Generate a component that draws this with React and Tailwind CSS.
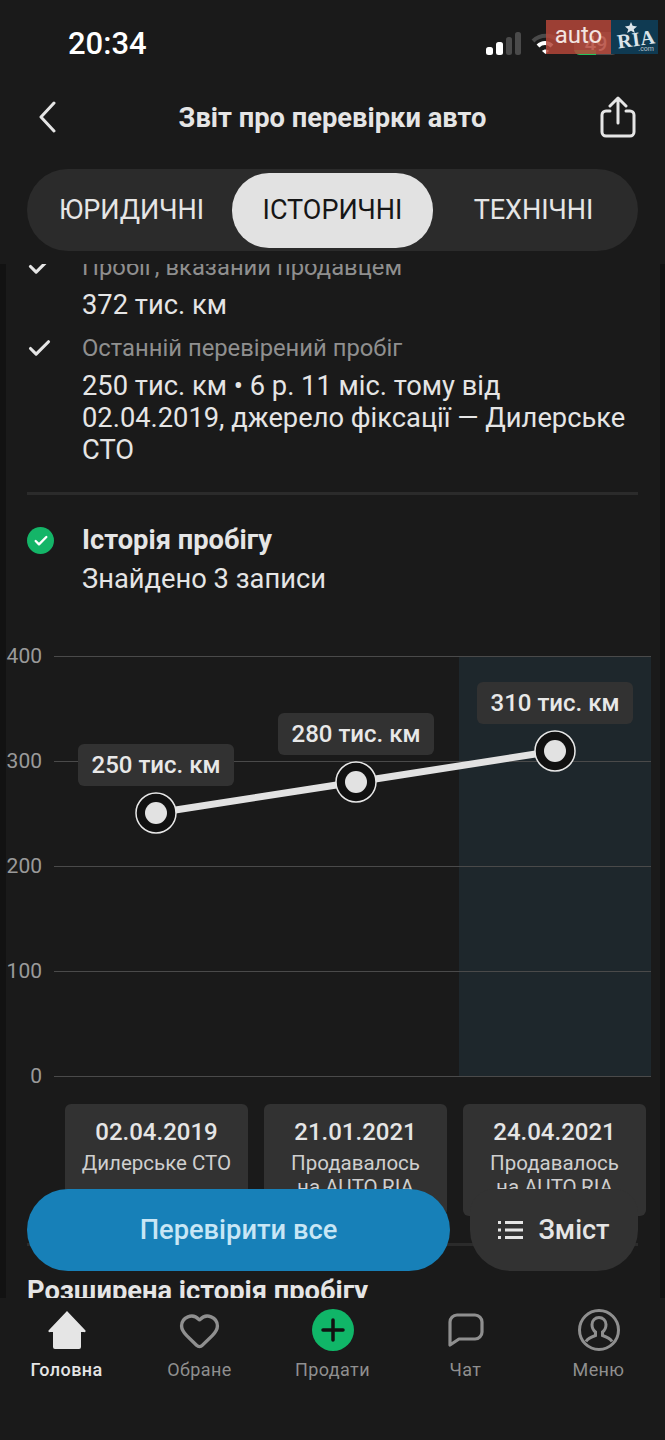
import React from "react";
import { Check, Heart } from "lucide-react";

const GRID = [
  { label: "400", y: 0 },
  { label: "300", y: 105 },
  { label: "200", y: 210 },
  { label: "100", y: 315 },
  { label: "0", y: 420 },
];

const POINTS = [
  { x: 156, y: 157, label: "250 тис. км" },
  { x: 356, y: 126, label: "280 тис. км" },
  { x: 555, y: 95, label: "310 тис. км" },
];

const CARDS = [
  { date: "02.04.2019", lines: ["Дилерське СТО"] },
  { date: "21.01.2021", lines: ["Продавалось", "на AUTO.RIA"] },
  { date: "24.04.2021", lines: ["Продавалось", "на AUTO.RIA"] },
];

function StatusBar() {
  return (
    <div className="relative h-[88px] shrink-0">
      <span className="absolute left-[68px] top-[26px] text-[31px] leading-[36px] font-medium text-white">20:34</span>
      <svg className="absolute left-[484px] top-[32px]" width="38" height="24" viewBox="0 0 38 24">
        <rect x="2" y="15" width="7" height="8" rx="2.5" fill="#fff" />
        <rect x="12" y="10" width="7" height="13" rx="2.5" fill="#fff" />
        <rect x="22" y="5" width="6" height="18" rx="2.5" fill="#4a4a4a" />
        <rect x="31" y="0" width="6" height="23" rx="2.5" fill="#4a4a4a" />
      </svg>
      <svg className="absolute left-[530px] top-[32px]" width="34" height="24" viewBox="0 0 34 24" fill="none">
        <path d="M3 9 C10 2 22 2 29 9" stroke="#4a4a4a" strokeWidth="4" />
        <path d="M8 14 C12 10 18 10 22 14" stroke="#fff" strokeWidth="4" />
        <path d="M12 19 L15.5 22 L19 19 C17 17 14 17 12 19Z" fill="#fff" />
      </svg>
      <div className="absolute left-[574px] top-[32px] flex h-[23px] w-[44px] items-center justify-center overflow-hidden rounded-md bg-[#4a4a4a] text-[20px] font-medium text-white">
        49
        <div className="absolute bottom-0 left-0 h-[5px] w-[22px] bg-[#22c55e]" />
      </div>
      {/* auto.ria watermark over the status bar */}
      <div className="absolute left-[546px] top-[20px] flex h-[34px]">
        <div className="flex w-[65px] justify-center bg-[#b4473a]/85 pt-[1px] text-[24px] leading-[28px] text-[#f3e4e1]">auto</div>
        <div className="relative w-[47px] overflow-hidden bg-[#0f3a52]">
          <span className="absolute left-[6px] top-[9px] -rotate-[8deg] font-['Liberation_Serif',serif] text-[20px] leading-[20px] font-bold tracking-[0.5px] text-[#dbe4ea]">RIA</span>
          <span className="absolute right-[4px] bottom-0 text-[7px] leading-[9px] text-white/70">.com</span>
          <svg className="absolute left-[13px] top-[2px]" width="14" height="11" viewBox="0 0 24 20">
            <path d="M12 0l3 7 8 1-6 5 2 7-7-4-7 4 2-7-6-5 8-1z" fill="#dbe4ea" />
          </svg>
        </div>
      </div>
    </div>
  );
}

function TitleBar() {
  return (
    <div className="relative flex h-[60px] shrink-0 items-center justify-center">
      <svg className="absolute left-[38px] top-[13px]" width="20" height="32" viewBox="0 0 20 32" fill="none" stroke="#e5e5e5" strokeWidth="3" strokeLinecap="round" strokeLinejoin="round">
        <path d="M16 2 3 16l13 14" />
      </svg>
      <h1 className="text-[27.3px] leading-[32px] font-bold text-[#e5e5e5]">Звіт про перевірки авто</h1>
      <svg className="absolute left-[599px] top-[8px]" width="38" height="42" viewBox="0 0 38 42" fill="none" stroke="#e5e5e5" strokeWidth="3" strokeLinecap="round" strokeLinejoin="round">
        <path d="M11 15H7a4 4 0 0 0-4 4v17a4 4 0 0 0 4 4h24a4 4 0 0 0 4-4V19a4 4 0 0 0-4-4h-4" />
        <path d="M19 27V3M11 10l8-8 8 8" />
      </svg>
    </div>
  );
}

function Tabs() {
  return (
    <div className="mx-[27px] mt-[21px] flex h-[82px] items-center rounded-[41px] bg-[#2b2b2b] px-[4px] text-[27px] leading-[32px] text-[#e5e5e5]">
      <div className="w-[201px] text-center">ЮРИДИЧНІ</div>
      <div className="flex h-[75px] w-[201px] items-center justify-center rounded-[37px] bg-[#e2e2e2] text-[#161616]">ІСТОРИЧНІ</div>
      <div className="w-[201px] text-center">ТЕХНІЧНІ</div>
    </div>
  );
}

function Chart() {
  return (
    <div className="relative h-[421px]">
      <div className="absolute left-[459px] top-0 h-[420px] w-[192px] bg-[#1e272c]" />
      {GRID.map((g) => (
        <React.Fragment key={g.label}>
          <div className="absolute left-[54px] h-px w-[597px] bg-[#4a4a4a]" style={{ top: g.y }} />
          <span className="absolute right-[623px] text-[21px] leading-[24px] text-[#9a9a9a]" style={{ top: g.y - 12 }}>{g.label}</span>
        </React.Fragment>
      ))}
      <svg className="absolute left-0 top-0" width="665" height="421" viewBox="0 0 665 421" fill="none">
        <polyline points={POINTS.map((p) => `${p.x},${p.y}`).join(" ")} stroke="#e2e2e2" strokeWidth="7" />
        {POINTS.map((p) => (
          <g key={p.x}>
            <circle cx={p.x} cy={p.y} r="20" fill="#111" stroke="#e8e8e8" strokeWidth="1.5" />
            <circle cx={p.x} cy={p.y} r="11" fill="#e2e2e2" />
          </g>
        ))}
      </svg>
      {POINTS.map((p) => (
        <div key={p.label} className="absolute flex h-[42px] w-[156px] items-center justify-center rounded-md bg-[#323232] text-[24px] font-medium text-[#e8e8e8]" style={{ left: p.x - 78, top: p.y - 69 }}>
          {p.label}
        </div>
      ))}
    </div>
  );
}

function NavItem({ label, active, children }) {
  return (
    <div className="flex w-[133px] flex-col items-center">
      <div className="flex h-[46px] items-center justify-center">{children}</div>
      <span className={`mt-[5px] text-[18px] leading-[24px] tracking-[0.4px] ${active ? "font-medium text-[#e5e5e5]" : "text-[#8f8f8f]"}`}>{label}</span>
    </div>
  );
}

function BottomNav() {
  return (
    <div className="flex h-[142px] shrink-0 bg-[#1a1a1a] pt-[9px]">
      <NavItem label="Головна" active>
        <svg width="38" height="40" viewBox="0 0 38 40">
          <path d="M19 1 L37 20 a1 1 0 0 1 -1 2 H33 V37 a2 2 0 0 1 -2 2 H7 a2 2 0 0 1 -2 -2 V22 H2 a1 1 0 0 1 -1 -2 Z" fill="#e5e5e5" />
        </svg>
      </NavItem>
      <NavItem label="Обране">
        <Heart size={43} strokeWidth={1.9} className="text-[#8f8f8f]" />
      </NavItem>
      <NavItem label="Продати">
        <svg width="42" height="42" viewBox="0 0 42 42">
          <circle cx="21" cy="21" r="21" fill="#10b668" />
          <path d="M21 11v20M11 21h20" stroke="#111" strokeWidth="3.5" strokeLinecap="round" />
        </svg>
      </NavItem>
      <NavItem label="Чат">
        <svg width="36" height="36" viewBox="0 0 36 36" fill="none" stroke="#8f8f8f" strokeWidth="3.2" strokeLinejoin="round">
          <path d="M2 33V10a7 7 0 0 1 7-7h18a7 7 0 0 1 7 7v10a7 7 0 0 1-7 7H11Z" />
        </svg>
      </NavItem>
      <NavItem label="Меню">
        <svg width="42" height="42" viewBox="0 0 42 42" fill="none" stroke="#8f8f8f" strokeWidth="3">
          <circle cx="21" cy="21" r="19.5" />
          <path d="M14 15.5a7 7 0 0 1 14 0c0 3-1.5 6-3.5 7.5v3.5c3 1 7.500 2.500 9.500 6M14 15.500c0 3 1.500 6 3.500 7.500v3.500c-3 1-7.500 2.500-9.500 6" />
        </svg>
      </NavItem>
    </div>
  );
}

export default function App() {
  return (
    <div className="flex h-[1440px] w-[665px] flex-col overflow-hidden bg-[#1a1a1a] font-['Roboto',sans-serif]">
      <div className="h-[264px] shrink-0">
        <StatusBar />
        <TitleBar />
        <Tabs />
      </div>

      <div className="relative flex-1 overflow-hidden border-x-[6px] border-x-[#121212] border-r-[5px]">
        <div className="-ml-[6px] -mt-[13px] w-[665px]">
          <div className="flex pl-[26px]">
            <Check className="mt-[2px] text-[#e5e5e5]" size={27} strokeWidth={2.8} />
            <p className="ml-[29px] text-[23.8px] leading-[32px] text-[#8f8f8f]">Пробіг, вказаний продавцем</p>
          </div>
          <p className="mt-[6px] pl-[82px] text-[27.3px] leading-[32px] text-[#e5e5e5]">372 тис. км</p>

          <div className="mt-[11px] flex pl-[26px]">
            <Check className="mt-[3px] text-[#e5e5e5]" size={27} strokeWidth={2.8} />
            <p className="ml-[29px] text-[23.8px] leading-[32px] text-[#8f8f8f]">Останній перевірений пробіг</p>
          </div>
          <p className="mt-[6px] w-[638px] pl-[82px] text-[27.3px] leading-[32px] text-[#e5e5e5]">
            250 тис. км • 6 р. 11 міс. тому від 02.04.2019, джерело фіксації — Дилерське СТО
          </p>

          <div className="mx-[27px] mt-[26px] h-[3px] bg-[#2b2b2b]" />

          <div className="mt-[29px] flex pl-[27px]">
            <div className="mt-[3px] flex h-[27px] w-[27px] items-center justify-center rounded-full bg-[#14b568]">
              <Check className="text-white" size={16} strokeWidth={3.5} />
            </div>
            <div className="ml-[28px]">
              <p className="text-[27.3px] leading-[32px] font-bold text-[#e5e5e5]">Історія пробігу</p>
              <p className="mt-[7px] text-[27.3px] leading-[32px] text-[#e5e5e5]">Знайдено 3 записи</p>
            </div>
          </div>

          <div className="mt-[61px]">
            <Chart />
          </div>

          <div className="mt-[27px] flex gap-[16px] pl-[65px]">
            {CARDS.map((c) => (
              <div key={c.date} className="h-[112px] w-[183px] rounded-md bg-[#323232] text-center text-[#e5e5e5]">
                {/* the caption is cut off inside the card in the reference */}
                <div className="h-[87px] overflow-hidden pt-[12px]">
                  <p className="text-[24px] leading-[32px] font-medium">{c.date}</p>
                  {c.lines.map((l) => (
                    <p key={l} className="mt-[7px] text-[20.5px] leading-[17px] text-[#cfcfcf]">{l}</p>
                  ))}
                </div>
              </div>
            ))}
          </div>

          <div className="mx-[27px] mt-[27px] h-[3px] bg-[#2b2b2b]" />
          <h2 className="mt-[29px] pl-[27px] text-[27.3px] leading-[32px] font-bold text-[#e5e5e5]">Розширена історія пробігу</h2>
        </div>

        {/* floating actions */}
        <div className="absolute left-[21px] top-[925px] flex w-[611px] items-center gap-[20px]">
          <button className="h-[82px] w-[423px] rounded-[41px] bg-[#1780b8] text-[27.3px] font-medium text-[#c8e6f5]">Перевірити все</button>
          <button className="flex h-[82px] w-[168px] items-center justify-center gap-[15px] rounded-b-[41px] rounded-t-[24px] bg-[#323232] text-[27px] font-medium text-[#e5e5e5]">
            <svg width="25" height="20" viewBox="0 0 25 20" fill="none" stroke="#e5e5e5" strokeWidth="3">
              <path d="M0 2.500h3M7 2.500h18M0 10h3M7 10h18M0 17.500h3M7 17.500h18" />
            </svg>
            Зміст
          </button>
        </div>
      </div>

      <BottomNav />
    </div>
  );
}
